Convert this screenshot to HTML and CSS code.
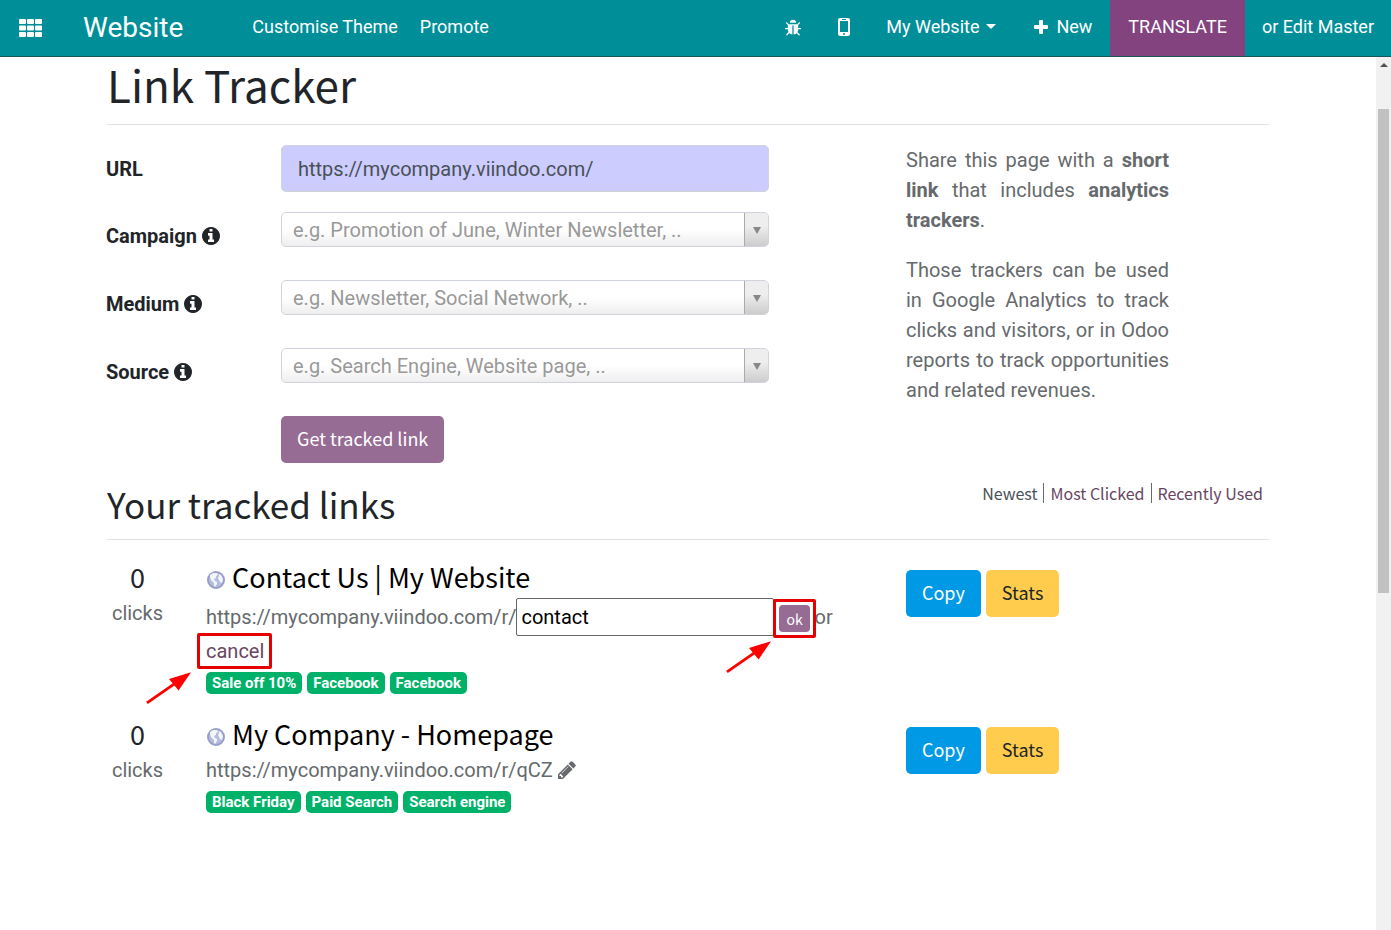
FILE: index.html
```html
<!DOCTYPE html>
<html lang="en">
<head>
    <meta charset="UTF-8">
    <meta name="viewport" content="width=device-width, initial-scale=1.0">
    <title>Link Tracker | My Website</title>
    <link rel="stylesheet" href="styles.css">
</head>
<body>
    <!-- Shared icons -->
    <svg class="sprite" aria-hidden="true">
        <symbol id="icon-info" viewBox="128 128 1536 1536">
            <path d="M1152 1376v-160q0-14-9-23t-23-9h-96v-512q0-14-9-23t-23-9h-320q-14 0-23 9t-9 23v160q0 14 9 23t23 9h96v320h-96q-14 0-23 9t-9 23v160q0 14 9 23t23 9h448q14 0 23-9t9-23zm-128-896v-160q0-14-9-23t-23-9h-192q-14 0-23 9t-9 23v160q0 14 9 23t23 9h192q14 0 23-9t9-23zm640 416q0 209-103 385.5t-279.5 279.5-385.5 103-385.5-103-279.5-279.5-103-385.5 103-385.5 279.5-279.5 385.5-103 385.5 103 279.5 279.5 103 385.5z"/>
        </symbol>
        <symbol id="icon-globe" viewBox="0 0 20 20">
            <circle cx="10" cy="10" r="8" fill="#b3bddd" stroke="#979ec8" stroke-width="2"/>
            <path fill="#f3f5fb" d="M4 5l3-2 4 0 1 2-2 1 0 2-2 1 1 2 2 1 0 2-2 3-1-1 0-3-3-3-1-3zM13 4l2 1 2 4-1 4-2-1-1-2-1-2 1-2z"/>
        </symbol>
        <symbol id="icon-arrow" viewBox="0 0 48 34">
            <path d="M1 33L30 13" stroke="#f00" stroke-width="3" fill="none"/>
            <path d="M47 1L24 8l10 12z" fill="#f00"/>
        </symbol>
    </svg>

    <header class="navbar">
        <button class="apps" aria-label="Applications">
            <svg width="24" height="18" viewBox="0 0 24 18" fill="currentColor">
                <rect x="0" y="0" width="7" height="5" rx="1"/><rect x="8" y="0" width="7" height="5" rx="1"/><rect x="16" y="0" width="7" height="5" rx="1"/>
                <rect x="0" y="6.5" width="7" height="5" rx="1"/><rect x="8" y="6.5" width="7" height="5" rx="1"/><rect x="16" y="6.5" width="7" height="5" rx="1"/>
                <rect x="0" y="13" width="7" height="5" rx="1"/><rect x="8" y="13" width="7" height="5" rx="1"/><rect x="16" y="13" width="7" height="5" rx="1"/>
            </svg>
        </button>
        <a class="brand" href="#">Website</a>
        <nav class="menu">
            <a href="#">Customise Theme</a>
            <a href="#">Promote</a>
        </nav>
        <div class="systray">
            <button class="tool" aria-label="Debug">
                <svg width="18" height="18" viewBox="0 0 1792 1792" fill="currentColor"><path d="M1696 960q0 26-19 45t-45 19h-224q0 171-67 290l208 209q19 19 19 45t-19 45q-18 19-45 19t-45-19l-198-197q-5 5-15 13t-42 28.5-65 36.5-82 29-97 13v-896h-128v896q-51 0-101.5-13.5t-87-33-66-39-43.5-32.5l-15-14-183 207q-20 21-48 21-24 0-43-16-19-18-20.5-44.5t15.5-46.5l202-227q-58-114-58-274h-224q-26 0-45-19t-19-45 19-45 45-19h224v-294l-173-173q-19-19-19-45t19-45 45-19 45 19l173 173h844l173-173q19-19 45-19t45 19 19 45-19 45l-173 173v294h224q26 0 45 19t19 45zm-480-576h-640q0-133 93.5-226.5t226.5-93.5 226.5 93.5 93.5 226.5z"/></svg>
            </button>
            <button class="tool" aria-label="Mobile preview">
                <svg width="12" height="20" viewBox="0 0 12 20" fill="currentColor"><path fill-rule="evenodd" d="M2 1h8a2 2 0 0 1 2 2v14a2 2 0 0 1-2 2H2a2 2 0 0 1-2-2V3a2 2 0 0 1 2-2zM2 4v11h8V4zM4 2v1h4V2zM6 16a1 1 0 1 0 0 2a1 1 0 1 0 0-2z"/></svg>
            </button>
            <button class="tool">My Website <span class="caret"></span></button>
            <button class="tool new">
                <svg width="14" height="14" viewBox="0 0 14 14" fill="currentColor"><path d="M5 1q0-1 1-1h2q1 0 1 1v4h4q1 0 1 1v2q0 1-1 1H9v4q0 1-1 1H6q-1 0-1-1V9H1q-1 0-1-1V6q0-1 1-1h4z"/></svg>
                New
            </button>
            <button class="tool translate">TRANSLATE</button>
            <button class="tool edit-master">or Edit Master</button>
        </div>
    </header>

    <div class="viewport">
        <main class="container">
            <h1>Link Tracker</h1>

            <div class="row tracker">
                <form class="col-main">
                    <div class="field">
                        <label for="url">URL</label>
                        <input type="text" id="url" value="https://mycompany.viindoo.com/">
                    </div>
                    <div class="field field-select">
                        <label for="campaign">Campaign <svg class="info"><use href="#icon-info"/></svg></label>
                        <div class="select-box">
                            <select id="campaign"><option>e.g. Promotion of June, Winter Newsletter, ..</option></select>
                        </div>
                    </div>
                    <div class="field field-select">
                        <label for="medium">Medium <svg class="info"><use href="#icon-info"/></svg></label>
                        <div class="select-box">
                            <select id="medium"><option>e.g. Newsletter, Social Network, ..</option></select>
                        </div>
                    </div>
                    <div class="field field-select">
                        <label for="source">Source <svg class="info"><use href="#icon-info"/></svg></label>
                        <div class="select-box">
                            <select id="source"><option>e.g. Search Engine, Website page, ..</option></select>
                        </div>
                    </div>
                    <div class="field">
                        <button type="button" class="btn btn-primary submit">Get tracked link</button>
                    </div>
                </form>
                <aside class="col-side">
                    <p>Share this page with a <strong>short link</strong> that includes <strong>analytics trackers</strong>.</p>
                    <p>Those trackers can be used in Google Analytics to track clicks and visitors, or in Odoo reports to track opportunities and related revenues.</p>
                </aside>
            </div>

            <div class="links-header">
                <h2>Your tracked links</h2>
                <nav class="sort">
                    <a class="active" href="#">Newest</a>
                    <a href="#">Most Clicked</a>
                    <a href="#">Recently Used</a>
                </nav>
            </div>

            <div class="row link">
                <div class="col-clicks">
                    <div class="count">0</div>
                    <div>clicks</div>
                </div>
                <div class="col-info">
                    <h3><svg class="globe"><use href="#icon-globe"/></svg> <a href="#">Contact Us | My Website</a></h3>
                    <div class="short-url">https://mycompany.viindoo.com/r/<input type="text" class="code" aria-label="Link code" value="contact"> <span class="marked mark-ok"><button class="btn-ok">ok</button><svg class="arrow"><use href="#icon-arrow"/></svg></span> or <span class="marked mark-cancel"><a href="#">cancel</a><svg class="arrow"><use href="#icon-arrow"/></svg></span></div>
                    <div class="tags">
                        <span class="tag">Sale off 10%</span>
                        <span class="tag">Facebook</span>
                        <span class="tag">Facebook</span>
                    </div>
                </div>
                <div class="col-actions">
                    <button class="btn btn-copy">Copy</button>
                    <button class="btn btn-stats">Stats</button>
                </div>
            </div>

            <div class="row link">
                <div class="col-clicks">
                    <div class="count">0</div>
                    <div>clicks</div>
                </div>
                <div class="col-info">
                    <h3><svg class="globe"><use href="#icon-globe"/></svg> <a href="#">My Company - Homepage</a></h3>
                    <div class="short-url">https://mycompany.viindoo.com/r/qCZ <button class="pencil" aria-label="Edit code"><svg width="18" height="18" viewBox="128 128 1536 1536" fill="currentColor"><path d="M491 1536l91-91-235-235-91 91v107h128v128h107zm523-928q0-22-22-22-10 0-17 7l-542 542q-7 7-7 17 0 22 22 22 10 0 17-7l542-542q7-7 7-17zm-54-192l416 416-832 832h-416v-416zm683 96q0 53-37 90l-166 166-416-416 166-165q36-38 90-38 53 0 91 38l235 234q37 39 37 91z"/></svg></button></div>
                    <div class="tags">
                        <span class="tag">Black Friday</span>
                        <span class="tag">Paid Search</span>
                        <span class="tag">Search engine</span>
                    </div>
                </div>
                <div class="col-actions">
                    <button class="btn btn-copy">Copy</button>
                    <button class="btn btn-stats">Stats</button>
                </div>
            </div>
        </main>

        <div class="scrollbar">
            <span class="scroll-up"></span>
            <span class="thumb"></span>
        </div>
    </div>
</body>
</html>
```
FILE: styles.css
```css
* {
    box-sizing: border-box;
}

body {
    margin: 0;
    min-height: 100vh;
    display: flex;
    flex-direction: column;
    font-family: Roboto, sans-serif;
    font-size: 20px;
    line-height: 30px;
    color: #666a6d;
    background-color: #fff;
}

button,
input,
select {
    font-family: inherit;
    font-size: inherit;
    margin: 0;
}

button {
    border: none;
    padding: 0;
    background: none;
    color: inherit;
    cursor: pointer;
}

a {
    color: #68465f;
    text-decoration: none;
}

.sprite {
    position: absolute;
    width: 0;
    height: 0;
}

/* Top bar */
.navbar {
    display: flex;
    height: 57px;
    background-color: #008f99;
    border-bottom: 1px solid #1c5560;
    color: #fff;
    font-size: 18px;
    line-height: 54px;
}

.navbar a {
    color: #fff;
}

.apps {
    width: 60px;
    padding: 0 0 4px 2px;
}

.apps svg,
.tool svg {
    vertical-align: middle;
}

.brand {
    padding: 0 23px;
    font-size: 28px;
    line-height: 56px;
}

.menu {
    display: flex;
    gap: 22px;
    margin-left: 46px;
}

.systray {
    display: flex;
    margin-left: auto;
}

.tool {
    height: 56px;
    padding: 0 18px 4px;
    white-space: nowrap;
}

.caret {
    display: inline-block;
    margin-left: 2px;
    vertical-align: 4px;
    border-top: 5px solid #fff;
    border-left: 5px solid transparent;
    border-right: 5px solid transparent;
}

.new svg {
    margin: -2px 4px 0 2px;
}

.translate {
    background-color: #82437f;
}

.edit-master {
    padding: 0 17px 4px;
}

/* Page area */
.viewport {
    flex: 1;
    display: flex;
}

.container {
    flex: 1;
    max-width: 1200px;
    margin: 0 auto;
    padding: 0 19px;
}

h1,
h2,
h3,
.count,
.btn,
.btn-ok,
.sort {
    font-family: "Noto Sans CJK JP", sans-serif;
    font-weight: 400;
}

h1 {
    margin: 0 0 20px;
    padding-bottom: 13px;
    border-bottom: 1px solid #dee2e6;
    font-size: 44px;
    line-height: 54px;
    color: #212529;
}

.row {
    display: flex;
    margin: 0 -19px;
}

.col-main,
.col-side,
.col-clicks,
.col-info,
.col-actions {
    padding: 0 19px 0 18px;
}

.col-main {
    width: 66.6667%;
}

.col-side,
.col-actions {
    width: 25%;
}

/* Form */
.field {
    display: grid;
    grid-template-columns: 175px minmax(0, 488px);
    align-items: start;
    min-height: 47px;
    margin-bottom: 20px;
}

.field-select {
    min-height: 48px;
}

.field label {
    padding-top: 9px;
    font-weight: bold;
    color: #212529;
}

.info {
    width: 18px;
    height: 18px;
    vertical-align: -2px;
    fill: #212529;
}

#url {
    height: 47px;
    padding: 0 16px;
    border: 1px solid #ced4da;
    border-radius: 5px;
    background-color: #ccccfe;
    color: #495057;
}

.select-box {
    position: relative;
}

.select-box select {
    display: block;
    width: 100%;
    height: 35px;
    padding: 0 36px 0 11px;
    appearance: none;
    border: 1px solid #ced4da;
    border-radius: 5px;
    background: linear-gradient(#fff 50%, #eee);
    color: #999;
}

.select-box::after {
    content: "";
    position: absolute;
    top: 1px;
    right: 1px;
    bottom: 1px;
    width: 24px;
    box-sizing: border-box;
    border-left: 1px solid #aaa;
    border-radius: 0 4px 4px 0;
    background: linear-gradient(#eee 40%, #ccc);
    pointer-events: none;
}

.select-box::before {
    content: "";
    position: absolute;
    z-index: 1;
    top: 15px;
    right: 8px;
    border-top: 7px solid #888;
    border-left: 4px solid transparent;
    border-right: 4px solid transparent;
    pointer-events: none;
}

.submit {
    grid-column: 2;
    justify-self: start;
}

.col-side p {
    margin: 0 0 20px;
    text-align: justify;
}

/* Buttons */
.btn {
    height: 47px;
    padding: 0 16px 3px;
    border-radius: 5px;
    font-size: 18px;
    line-height: 44px;
}

.btn-primary {
    background-color: #966c94;
    color: #fff;
}

.btn-copy {
    background-color: #0099e5;
    color: #fff;
}

.btn-stats {
    background-color: #ffcc4d;
    color: #212529;
}

/* Tracked links */
.links-header {
    display: flex;
    justify-content: space-between;
    margin-bottom: 20px;
    border-bottom: 1px solid #dee2e6;
}

h2 {
    margin: 0;
    padding-bottom: 14px;
    font-size: 35px;
    line-height: 42px;
    color: #212529;
}

.sort {
    display: flex;
    align-self: flex-start;
    font-size: 16px;
    line-height: 20px;
}

.sort a {
    padding: 0 6px;
}

.sort a + a {
    border-left: 1px solid #666a6d;
}

.sort .active {
    color: #495057;
}

.link {
    margin-bottom: 19px;
}

.col-clicks {
    width: 8.3333%;
    text-align: center;
}

.count,
h3 {
    margin: 0 0 4px;
    font-size: 27px;
    line-height: 34px;
}

.count {
    color: #212529;
}

.col-info {
    width: 58.3333%;
}

h3 a {
    color: #000;
}

.globe {
    width: 20px;
    height: 20px;
    vertical-align: -2px;
}

.code {
    width: 258px;
    height: 38px;
    padding: 0 4px;
    border: 1px solid #666;
    border-radius: 2px;
    color: #000;
}

.btn-ok {
    display: block;
    height: 27px;
    padding: 0 7px;
    border-radius: 4px;
    background-color: #966c94;
    color: #fff;
    font-size: 14px;
    line-height: 26px;
}

/* Red marks drawn over the two controls */
.marked {
    position: relative;
}

.mark-ok {
    display: inline-block;
    vertical-align: middle;
}

.marked::after {
    content: "";
    position: absolute;
    inset: -6px;
    border: 3px solid #e60000;
    border-radius: 2px;
    pointer-events: none;
}

.mark-cancel::after {
    inset: -6px -8px -6px -9px;
}

.arrow {
    position: absolute;
    top: calc(100% + 8px);
    right: calc(100% + 7px);
    width: 46px;
    height: 33px;
    pointer-events: none;
}

.mark-cancel .arrow {
    right: calc(100% + 14px);
}

.pencil {
    vertical-align: -2px;
    line-height: 18px;
}

.pencil svg {
    display: block;
}

.tags {
    display: flex;
    gap: 5px;
    margin-top: 2px;
    padding: 4px 0;
}

.tag {
    padding: 0 6px;
    border-radius: 5px;
    background-color: #00b16a;
    color: #fff;
    font-size: 15px;
    font-weight: bold;
    line-height: 22px;
}

.col-actions {
    display: flex;
    align-items: flex-start;
    gap: 5px;
    padding-top: 10px;
}

/* Scroll bar */
.scrollbar {
    width: 15px;
    background-color: #f1f1f1;
}

.scroll-up {
    display: block;
    margin: 6px auto 42px;
    width: 8px;
    border-bottom: 4px solid #505050;
    border-left: 4px solid transparent;
    border-right: 4px solid transparent;
}

.thumb {
    display: block;
    margin: 0 2px;
    height: 484px;
    background-color: #c1c1c1;
}
```
